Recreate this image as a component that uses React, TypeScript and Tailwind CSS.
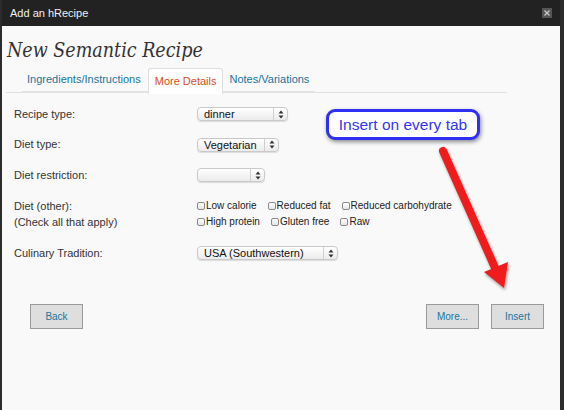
import React from "react";

function Arrows() {
  return (
    <svg width="6" height="9" viewBox="0 0 6 9" className="block">
      <path d="M0.5 3.6 L3 0.6 L5.5 3.6 Z" fill="#333" />
      <path d="M0.5 5.4 L3 8.4 L5.5 5.4 Z" fill="#333" />
    </svg>
  );
}

function Select({ w, text }: { w: string; text: string }) {
  return (
    <div
      className={`${w} h-[14px] flex items-stretch rounded-[4px] border border-[#c9c9c9] bg-gradient-to-b from-white to-[#ebebeb] shadow-[0_1px_1px_rgba(0,0,0,0.12)]`}
    >
      <div className="flex-1 pl-[6px] text-[11px] leading-[12px] text-[#111] whitespace-nowrap overflow-hidden">
        {text}
      </div>
      <div className="w-[14px] border-l border-[#cfcfcf] flex items-center justify-center">
        <Arrows />
      </div>
    </div>
  );
}

function Check({ label }: { label: string }) {
  return (
    <div className="flex items-center">
      <div className="w-[8px] h-[8px] rounded-[2px] border border-[#8a8a8a] bg-gradient-to-b from-white to-[#e6e6e6] mr-[1px]" />
      <span className="text-[10px] leading-[12px] text-[#222]">{label}</span>
    </div>
  );
}

function Btn({ label }: { label: string }) {
  return (
    <div className="w-[53px] h-[25px] bg-[#dedede] border border-[#9a9a9a] flex items-center justify-center text-[10px] text-[#21759b]">
      {label}
    </div>
  );
}

export default function App() {
  return (
    <div className="relative w-[564px] h-[410px] overflow-hidden bg-[#2c2c2c] flex font-['Liberation_Sans',Arial,sans-serif]">
      <div className="ml-[2px] w-[558px] flex flex-col">
        <div className="h-[26px] bg-[#222222] flex items-center justify-between pl-[8px] pr-[8px]">
          <span className="text-[11px] text-[#f0f0f0]">Add an hRecipe</span>
          <div className="w-[10px] h-[10px] bg-[#555] flex items-center justify-center">
            <svg width="6" height="6" viewBox="0 0 6 6">
              <path d="M0.5 0.5 L5.5 5.5 M5.5 0.5 L0.5 5.5" stroke="#c8c8c8" strokeWidth="1.3" />
            </svg>
          </div>
        </div>
        <div className="flex-1 bg-[#f9f9f9] flex flex-col">
          <div className="h-[42px] pl-[5px] pt-[13px] font-['DejaVu_Serif_Condensed','DejaVu_Serif',Georgia,serif] font-stretch-condensed italic text-[19.5px] leading-[24px] text-[#333]">
            New Semantic Recipe
          </div>
          <div className="ml-[4px] w-[501px] h-[25px] border-b border-[#dfdfdf] flex">
            <div className="ml-[16px] flex h-[25px] border-b-2 border-[#e3e3e3]">
              <div className="pl-[5px] pr-[7px] flex items-center text-[11px] text-[#21759b]">Ingredients/Instructions</div>
              <div className="px-[6px] flex items-center text-[11px] text-[#d54e21] bg-white border border-[#dfdfdf] border-b-0 rounded-t-[3px] h-[26px] -mb-[2px]">
                More Details
              </div>
              <div className="px-[6px] flex items-center text-[11px] text-[#21759b]">Notes/Variations</div>
            </div>
          </div>
          <div className="pt-[6px] pl-[12px] flex flex-col text-[11px] text-[#333]">
            <div className="flex items-center h-[30px]">
              <div className="w-[183px]">Recipe type:</div>
              <Select w="w-[91px]" text="dinner" />
            </div>
            <div className="flex items-center h-[31px]">
              <div className="w-[183px]">Diet type:</div>
              <Select w="w-[82px]" text="Vegetarian" />
            </div>
            <div className="flex items-center h-[30px]">
              <div className="w-[183px]">Diet restriction:</div>
              <Select w="w-[68px]" text="" />
            </div>
            <div className="flex pt-[8px]">
              <div className="w-[183px] flex flex-col">
                <div className="h-[16px] flex items-center">Diet (other):</div>
                <div className="h-[16px] flex items-center">(Check all that apply)</div>
              </div>
              <div className="flex flex-col">
                <div className="h-[16px] flex items-center gap-[11px]">
                  <Check label="Low calorie" />
                  <Check label="Reduced fat" />
                  <Check label="Reduced carbohydrate" />
                </div>
                <div className="h-[16px] flex items-center gap-[11px]">
                  <Check label="High protein" />
                  <Check label="Gluten free" />
                  <Check label="Raw" />
                </div>
              </div>
            </div>
            <div className="flex items-center h-[30px] mt-[8px]">
              <div className="w-[183px]">Culinary Tradition:</div>
              <Select w="w-[141px]" text="USA (Southwestern)" />
            </div>
          </div>
          <div className="mt-[36px] flex items-center pl-[28px] pr-[16px]">
            <Btn label="Back" />
            <div className="flex-1" />
            <div className="flex gap-[12px]">
              <Btn label="More..." />
              <Btn label="Insert" />
            </div>
          </div>
        </div>
      </div>

      <div className="absolute left-[326px] top-[109px] w-[154px] h-[31px] rounded-[9px] border-[3px] border-[#3030f5] bg-white shadow-[1px_2px_4px_rgba(0,0,0,0.45)] flex items-center justify-center">
        <span className="text-[15.5px] text-[#3535f0] leading-none">Insert on every tab</span>
      </div>

      <svg className="absolute left-0 top-0" width="564" height="410" viewBox="0 0 564 410">
        <defs>
          <filter id="sh" x="-20%" y="-20%" width="140%" height="140%">
            <feDropShadow dx="1" dy="2" stdDeviation="1.5" floodColor="#000" floodOpacity="0.4" />
          </filter>
        </defs>
        <g filter="url(#sh)">
          <line x1="443" y1="151" x2="496" y2="270" stroke="#ee1b1b" strokeWidth="8" strokeLinecap="round" />
          <path d="M484 272 L508 262 L504 288 Z" fill="#ee1b1b" />
        </g>
      </svg>
    </div>
  );
}
